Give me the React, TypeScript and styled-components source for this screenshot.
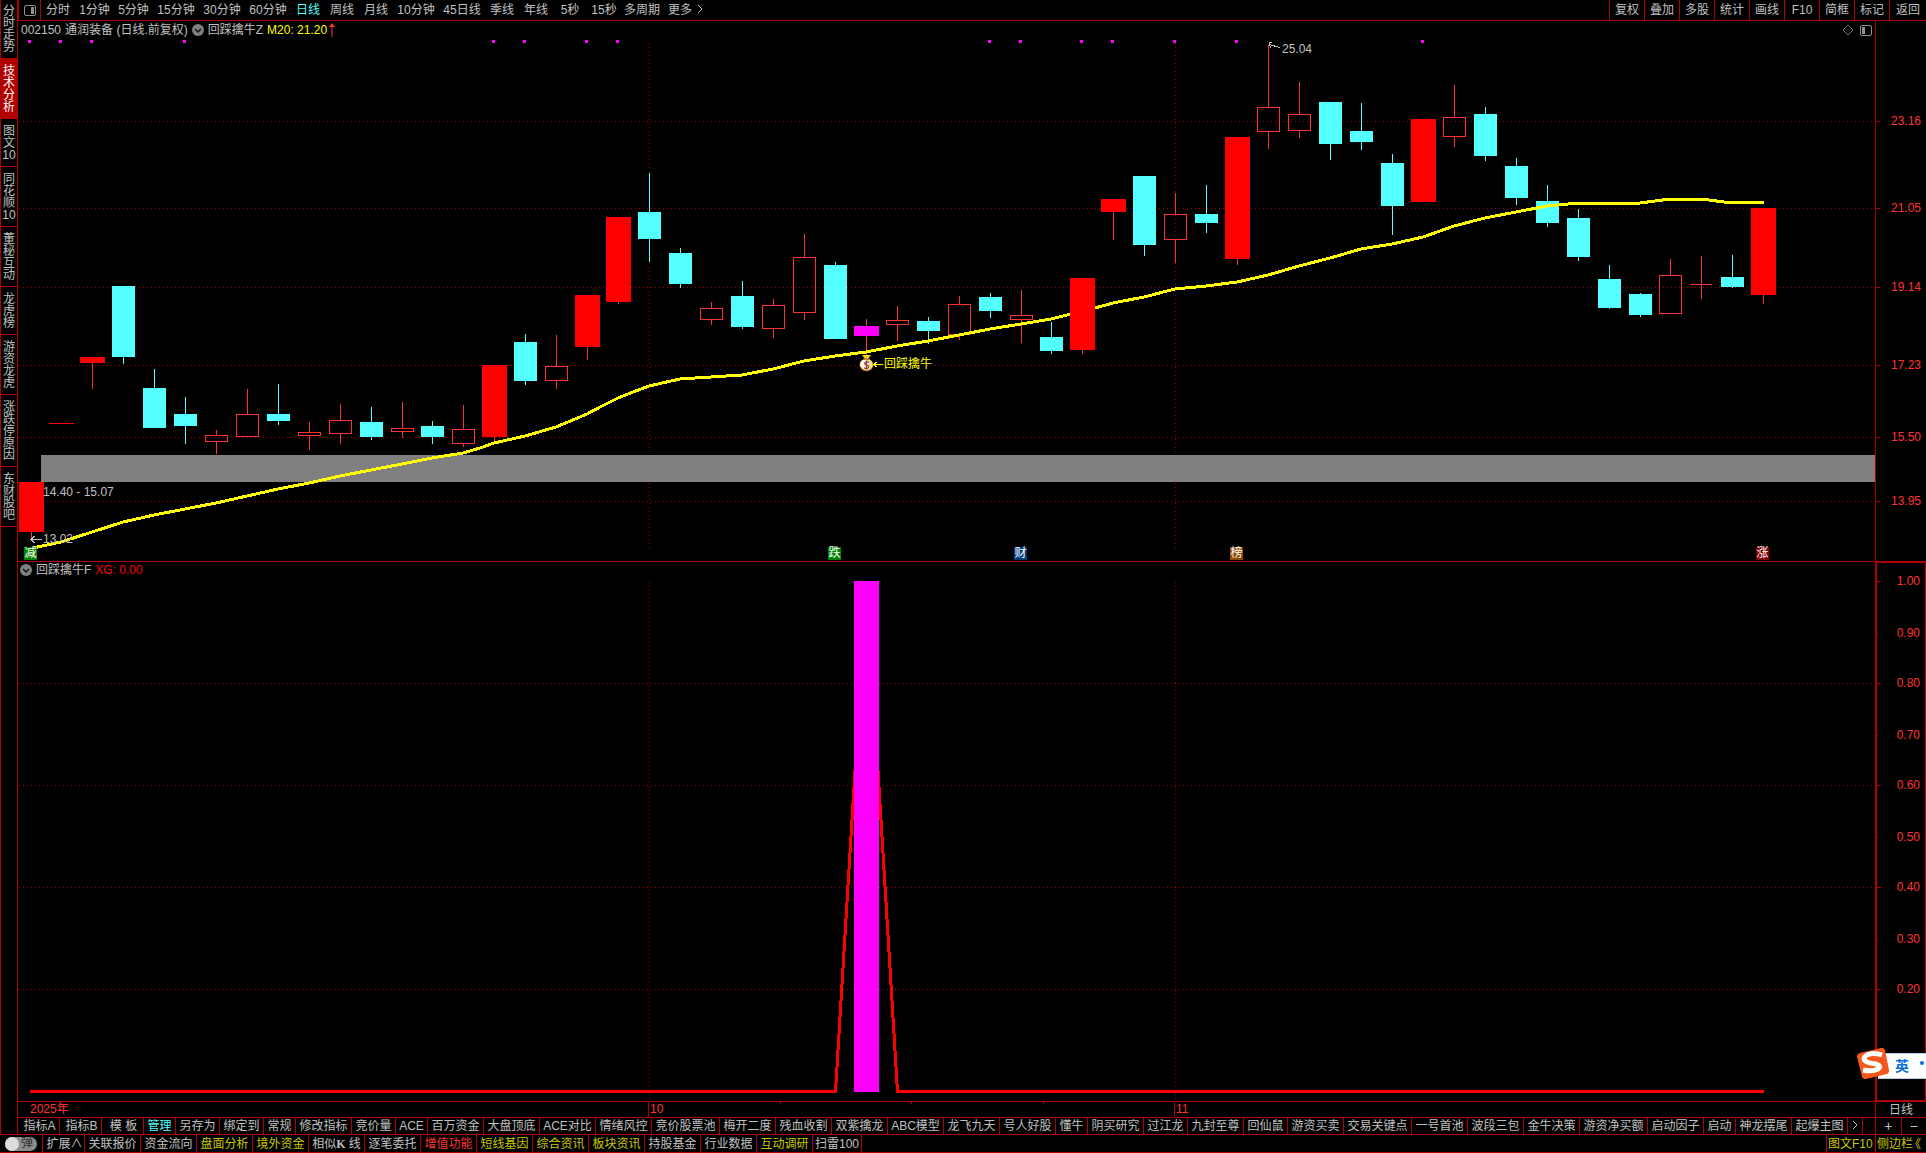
import React from 'react';
import styled, { createGlobalStyle } from 'styled-components';

const c = {
  line: '#b00000',
  grid: '#a00000',
  text: '#c0c0c0',
  cyan: '#54ffff',
  yellow: '#ffff00',
  olive: '#c8c800',
  red: '#ff0000',
  soft: '#ff3232',
  magenta: '#ff00ff',
};

const Global = createGlobalStyle`
  * { box-sizing: border-box; }
  html, body, #root { height: 100%; }
  body {
    margin: 0;
    background: #000;
    color: ${c.text};
    font: 12px/14px "Liberation Sans", "Noto Sans CJK SC", sans-serif;
  }
  button, a {
    font: inherit;
    color: inherit;
    background: none;
    border: 0;
    padding: 0;
    margin: 0;
    text-decoration: none;
    white-space: nowrap;
  }
`;

const Page = styled.div`
  display: flex;
  flex-direction: column;
  height: 100vh;
  overflow: hidden;
`;

const Workspace = styled.div`
  flex: 1;
  display: flex;
  min-height: 0;
`;

const Sidebar = styled.nav`
  flex: 0 0 18px;
  border: 1px solid ${c.line};
  border-top: 0;
`;

const SideTab = styled.button<{ $on?: boolean }>`
  display: block;
  width: 100%;
  padding: 6px 1px 5px;
  border-bottom: 1px solid ${c.line};
  line-height: 12px;
  white-space: normal;
  color: ${(p) => (p.$on ? '#fff' : c.text)};
  background: ${(p) => (p.$on ? c.line : 'none')};
  &:first-child { padding-top: 5px; }
`;

const Main = styled.main`
  flex: 1;
  min-width: 0;
  display: grid;
  grid-template-rows: 21px minmax(0, 541fr) minmax(0, 540fr) 16px 17px;
`;

const Toolbar = styled.header`
  display: flex;
  border-bottom: 1px solid ${c.line};
`;

const Spacer = styled.div`
  flex: 1;
`;

const PanelToggle = styled.button`
  width: 23px;
  display: flex;
  align-items: center;
  justify-content: center;
  border: solid ${c.line};
  border-width: 0 1px;
`;

const widths = { s: 34, m: 39, l: 42, xl: 46 };

const Period = styled.button<{ $size: keyof typeof widths; $on?: boolean }>`
  width: ${(p) => widths[p.$size]}px;
  color: ${(p) => (p.$on ? c.cyan : c.text)};
`;

const Tool = styled.button`
  width: 35px;
  border-left: 1px solid ${c.line};
  &:last-child { width: 37px; }
`;

const Row = styled.div`
  display: grid;
  grid-template-columns: minmax(0, 1fr) 51px;
`;

const Plot = styled.section`
  position: relative;
  border-bottom: 1px solid ${c.line};
`;

const Drawing = styled.svg`
  position: absolute;
  inset: 0;
  width: 100%;
  height: 100%;
`;

const Caption = styled.div<{ $tight?: boolean }>`
  position: relative;
  display: flex;
  align-items: center;
  gap: 4px;
  height: ${(p) => (p.$tight ? 16 : 18)}px;
  padding: 0 ${(p) => (p.$tight ? 2 : 3)}px;
`;

const Value = styled.span<{ $color: string }>`
  display: flex;
  align-items: center;
  gap: 2px;
  color: ${(p) => p.$color};
`;

const Corner = styled.div`
  display: flex;
  align-items: center;
  gap: 6px;
`;

const Mark = styled.span<{ $color?: string }>`
  position: absolute;
  transform: translateY(-50%);
  white-space: nowrap;
  color: ${(p) => p.$color || c.text};
`;

const Badge = styled.span<{ $bg: string }>`
  position: absolute;
  width: 13px;
  height: 13px;
  line-height: 13px;
  text-align: center;
  color: #fff;
  background: ${(p) => p.$bg};
`;

const PriceAxis = styled.aside`
  position: relative;
  border: 0 solid ${c.line};
  border-width: 0 0 1px 1px;
`;

const ValueAxis = styled.aside`
  position: relative;
  border: solid ${c.line};
  border-width: 1px 1px 2px 2px;
`;

const Tick = styled.div<{ $minor?: boolean }>`
  position: absolute;
  left: 0;
  right: 5px;
  height: 13px;
  line-height: 13px;
  margin-top: -6px;
  display: flex;
  align-items: center;
  justify-content: space-between;
  color: ${c.soft};
  &::before {
    content: '';
    width: ${(p) => (p.$minor ? 1 : 4)}px;
    height: 1px;
    background: ${c.line};
  }
`;

const Dates = styled.div`
  position: relative;
  border-bottom: 1px solid ${c.line};
`;

const DateMark = styled.span<{ $rule?: boolean }>`
  position: absolute;
  top: 0;
  height: 15px;
  line-height: 15px;
  padding-left: 1px;
  border-left: 1px solid ${(p) => (p.$rule ? c.line : 'transparent')};
  color: ${c.soft};
`;

const DateTick = styled.i`
  position: absolute;
  top: 0;
  width: 1px;
  height: 2px;
  background: ${c.line};
`;

const SideCell = styled.div`
  display: flex;
  align-items: stretch;
  justify-content: center;
  border: 0 solid ${c.line};
  border-width: 0 0 1px 1px;
`;

const Half = styled.button`
  flex: 1;
  font-size: 14px;
  line-height: 14px;
  & + & { border-left: 1px solid ${c.line}; }
`;

const Strip = styled.nav`
  display: flex;
  overflow: hidden;
  border-bottom: 1px solid ${c.line};
`;

const cellWidths = { xs: 15, two: 32, label: 42, three: 44, mixed: 49, four: 56, five: 68 };

const Cell = styled.button<{ $w: keyof typeof cellWidths; $color?: string }>`
  flex: 0 0 ${(p) => cellWidths[p.$w]}px;
  padding-left: ${(p) => (p.$w === 'label' ? 2 : 0)}px;
  border-right: 1px solid ${c.line};
  color: ${(p) => p.$color || c.text};
`;

const Footer = styled.footer`
  flex: 0 0 18px;
  min-height: 0;
  display: flex;
  border-bottom: 1px solid ${c.line};
`;

const SwitchBox = styled.label`
  flex: 0 0 43px;
  display: flex;
  align-items: center;
  justify-content: center;
  border-right: 1px solid ${c.line};
  position: relative;
`;

const Switch = styled.input`
  appearance: none;
  margin: 0;
  width: 32px;
  height: 14px;
  border-radius: 7px;
  background: #8c8c8c;
  display: flex;
  &::before {
    content: '';
    width: 14px;
    height: 14px;
    border-radius: 50%;
    background: #dcdcdc;
  }
`;

const SwitchText = styled.span`
  position: absolute;
  left: 21px;
  top: 1px;
  color: #303030;
`;

const Serif = styled.b`
  font-family: "Liberation Serif", serif;
`;

const FootLink = styled.a<{ $wide?: boolean }>`
  flex: 0 0 ${(p) => (p.$wide ? 51 : 49)}px;
  display: flex;
  align-items: center;
  padding-left: 1px;
  border-left: 1px solid ${c.line};
  color: ${c.olive};
  overflow: hidden;
`;

const HalfMark = styled.span`
  margin-left: 2px;
  font-family: "Noto Sans CJK SC", sans-serif;
  font-feature-settings: "halt";
`;

const ImeBar = styled.div`
  position: fixed;
  right: 0;
  bottom: 74px;
  width: 48px;
  height: 26px;
  display: flex;
  align-items: center;
  background: #fff;
  border: solid #b8d0ee;
  border-width: 1px 0;
  color: #0a6fd8;
  font-size: 14px;
  font-weight: bold;
`;

const ImeText = styled.span`
  margin: 0 11px 0 17px;
`;

const ImeLogo = styled.svg`
  position: absolute;
  left: -21px;
  bottom: -1px;
  width: 32px;
  height: 31px;
`;

const ImeDot = styled.i`
  width: 4px;
  height: 4px;
  margin-bottom: 6px;
  border-radius: 50%;
  background: #0a6fd8;
`;

type Box = { x: number; y: number; w: number; h: number };
const priceBox: Box = { x: 18, y: 21, w: 1857, h: 540 };
const valueBox: Box = { x: 18, y: 562, w: 1857, h: 539 };
const valueAxisBox: Box = { x: 1877, y: 563, w: 48, h: 537 };
const viewBox = (b: Box) => `${b.x} ${b.y} ${b.w} ${b.h}`;
const at = (b: Box, x: number, y: number) => ({
  left: `${((x - b.x) / b.w) * 100}%`,
  top: `${((y - b.y) / b.h) * 100}%`,
});

// kind, centre x, body top, body bottom, high, low
type Candle = [string, number, number, number, number, number];
const candles: Candle[] = [
  ['r', 31, 482, 532, 482, 538],
  ['l', 61, 423, 424, 423, 424],
  ['r', 92, 357, 363, 357, 389],
  ['d', 123, 286, 357, 286, 364],
  ['d', 154, 388, 428, 369, 428],
  ['d', 185, 414, 426, 397, 444],
  ['u', 216, 435, 442, 430, 454],
  ['u', 247, 414, 437, 389, 437],
  ['d', 278, 414, 421, 384, 425],
  ['u', 309, 432, 436, 422, 450],
  ['u', 340, 420, 434, 404, 444],
  ['d', 371, 422, 437, 407, 440],
  ['u', 402, 428, 432, 402, 438],
  ['d', 432, 426, 437, 421, 444],
  ['u', 463, 429, 444, 405, 447],
  ['r', 494, 365, 437, 365, 441],
  ['d', 525, 342, 381, 334, 385],
  ['u', 556, 366, 381, 335, 389],
  ['r', 587, 295, 347, 295, 360],
  ['r', 618, 217, 302, 217, 304],
  ['d', 649, 212, 239, 173, 262],
  ['d', 680, 253, 284, 248, 288],
  ['u', 711, 308, 320, 302, 325],
  ['d', 742, 296, 327, 281, 329],
  ['u', 773, 305, 329, 299, 338],
  ['u', 804, 257, 313, 234, 320],
  ['d', 835, 265, 339, 262, 339],
  ['m', 866, 326, 336, 319, 355],
  ['u', 897, 320, 325, 306, 341],
  ['d', 928, 321, 331, 317, 344],
  ['u', 959, 304, 335, 296, 340],
  ['d', 990, 297, 311, 293, 318],
  ['u', 1021, 315, 320, 290, 343],
  ['d', 1051, 337, 351, 322, 354],
  ['r', 1082, 278, 350, 278, 354],
  ['r', 1113, 199, 212, 199, 240],
  ['d', 1144, 176, 245, 176, 256],
  ['u', 1175, 214, 240, 193, 263],
  ['d', 1206, 214, 223, 185, 233],
  ['r', 1237, 137, 259, 137, 265],
  ['u', 1268, 107, 132, 45, 149],
  ['u', 1299, 114, 131, 82, 138],
  ['d', 1330, 102, 144, 102, 160],
  ['d', 1361, 131, 142, 103, 150],
  ['d', 1392, 163, 206, 154, 235],
  ['r', 1423, 119, 202, 119, 202],
  ['u', 1454, 117, 137, 85, 147],
  ['d', 1485, 114, 156, 107, 161],
  ['d', 1516, 166, 198, 158, 205],
  ['d', 1547, 201, 223, 185, 227],
  ['d', 1578, 218, 257, 209, 261],
  ['d', 1609, 279, 308, 265, 309],
  ['d', 1640, 294, 315, 293, 317],
  ['u', 1670, 275, 314, 259, 314],
  ['+', 1701, 284, 285, 256, 299],
  ['d', 1732, 277, 287, 255, 288],
  ['r', 1763, 208, 295, 208, 304],
];

const average =
  '28,549 61,542 92,532 123,522 154,515 185,509 216,503 247,496 278,489 309,483 340,476 371,470 402,464 432,458 463,453 480,448 494,443 525,436 556,427 587,414 602,406 618,398 633,392 649,386 680,379 711,377 742,375 773,369 804,361 835,356 866,352 897,346 928,341 959,335 990,329 1021,324 1051,319 1071,314 1095,308 1113,303 1144,297 1175,289 1206,286 1237,282 1268,275 1299,266 1330,258 1361,249 1392,244 1423,237 1454,226 1485,218 1516,212 1547,206 1578,203 1640,203 1670,199 1701,199 1732,203 1750,202 1764,202';

const signals = [28, 59, 90, 183, 492, 523, 585, 616, 988, 1019, 1080, 1111, 1173, 1235, 1421];
const prices: [string, number][] = [
  ['23.16', 121], ['21.05', 208], ['19.14', 287], ['17.23', 365], ['15.50', 437], ['13.95', 501],
];
const values: [string, number][] = [
  ['1.00', 581], ['0.90', 633], ['0.80', 683], ['0.70', 735], ['0.60', 785],
  ['0.50', 837], ['0.40', 887], ['0.30', 939], ['0.20', 989],
];

function CandleShape({ data }: { data: Candle }) {
  const [kind, x, top, bottom, high, low] = data;
  const color = kind === 'd' ? c.cyan : c.soft;
  const h = bottom - top;
  return (
    <g>
      {high < top && <rect x={x} y={high} width={1} height={top - high} fill={color} />}
      {low > bottom && <rect x={x} y={bottom} width={1} height={low - bottom} fill={color} />}
      {kind === 'd' && <rect x={x - 11} y={top} width={23} height={h} fill={c.cyan} />}
      {kind === 'u' && <rect x={x - 10.5} y={top + 0.5} width={22} height={h - 1} fill="none" stroke={c.soft} />}
      {(kind === 'r' || kind === 'l') && <rect x={x - 12} y={top} width={25} height={h} fill={c.red} />}
      {kind === '+' && <rect x={x - 11} y={top} width={22} height={1} fill={c.soft} />}
      {kind === 'm' && <rect x={x - 12} y={top} width={25} height={h} fill={c.magenta} />}
    </g>
  );
}

function Dotted({ d }: { d: string }) {
  return <path d={d} stroke={c.grid} strokeDasharray="1 3" fill="none" />;
}

function Chevron() {
  return (
    <svg width="12" height="12" viewBox="0 0 12 12" aria-hidden="true">
      <circle cx="6" cy="6" r="6" fill="#808080" />
      <path d="M3 5l3 3 3-3" stroke="#101010" strokeWidth="1.5" fill="none" />
    </svg>
  );
}

function PanelIcon({ right }: { right?: boolean }) {
  return (
    <svg width="12" height="11" viewBox="0 0 12 11" aria-hidden="true">
      <rect x="0.5" y="0.5" width="11" height="10" rx="1.5" fill="none" stroke="#909090" />
      <rect x={right ? 7 : 2} y="2" width="3" height="7" fill="#909090" />
    </svg>
  );
}

function PriceChart() {
  return (
    <Drawing viewBox={viewBox(priceBox)} preserveAspectRatio="none" shapeRendering="crispEdges">
      {prices.map(([p, y]) => <Dotted key={p} d={`M19 ${y + 0.5}H1875`} />)}
      <Dotted d="M649.5 43V548" />
      <Dotted d="M1175.5 43V548" />
      <rect x="41" y="455" width="1834" height="27" fill="#808080" />
      {signals.map((x) => <rect key={x} x={x} y="40" width="3" height="3" fill={c.magenta} />)}
      {candles.filter((k) => k[0] !== 'r').map((k) => <CandleShape key={k[1]} data={k} />)}
      <polyline points={average} fill="none" stroke={c.yellow} strokeWidth="3" />
      {candles.filter((k) => k[0] === 'r').map((k) => <CandleShape key={k[1]} data={k} />)}
      <path d="M31 539.5H42M34.5 536L31 539.5L34.5 543" stroke={c.text} fill="none" />
      <path d="M1280 47.5L1269 44.5M1272 42.5H1269V45L1271 47.5" stroke={c.text} fill="none" />
      <g shapeRendering="auto">
        <path d="M862 355h9l-3 4h-3z" fill="#f0d800" />
        <ellipse cx="866.5" cy="365" rx="7" ry="6.5" fill="#8a4a30" />
        <ellipse cx="866.5" cy="364.7" rx="6.4" ry="5.8" fill="#f6e27a" />
        <ellipse cx="864.5" cy="364" rx="4.2" ry="4" fill="#fffbe0" />
        <path d="M863.5 358.500h6v1.500h-6z" fill="#c08040" />
        <path d="M869 362.5q-2-1.2-4 0q-1 2 1.5 2.500q3.500 .8 1.500 3q-2 1-4-.3M866.5 360.500v9" stroke="#8a3a50" strokeWidth="1.2" fill="none" />
      </g>
      <path d="M874 364.5H883M876.500 362L874 364.500L876.500 367" stroke={c.yellow} fill="none" />
    </Drawing>
  );
}

function ValueChart() {
  return (
    <Drawing viewBox={viewBox(valueBox)} preserveAspectRatio="none" shapeRendering="crispEdges">
      {[683, 785, 887, 989].map((y) => <Dotted key={y} d={`M19 ${y + 0.5}H1875`} />)}
      <Dotted d="M649.5 582V1101" />
      <Dotted d="M1175.5 582V1101" />
      <polyline points="30,1091.5 835.5,1091.5 866.5,581 897.5,1091.5 1764,1091.5" fill="none" stroke={c.red} strokeWidth="3" />
      <rect x="854" y="581" width="25" height="511" fill={c.magenta} />
    </Drawing>
  );
}

const sideTabs = ['分时走势', '技术分析', '图文10', '同花顺10', '董秘互动', '龙虎榜', '游资龙虎', '涨跌停原因', '东财股吧'];

const periods: [string, keyof typeof widths][] = [
  ['分时', 's'], ['1分钟', 'm'], ['5分钟', 'm'], ['15分钟', 'xl'], ['30分钟', 'xl'], ['60分钟', 'xl'],
  ['日线', 's'], ['周线', 's'], ['月线', 's'], ['10分钟', 'xl'], ['45日线', 'xl'], ['季线', 's'],
  ['年线', 's'], ['5秒', 's'], ['15秒', 's'], ['多周期', 'l'], ['更多', 's'],
];

const tools = ['复权', '叠加', '多股', '统计', '画线', 'F10', '简框', '标记', '返回'];

type W = keyof typeof cellWidths;
const templates: [string, W][] = [
  ['指标A', 'label'], ['指标B', 'label'], ['模 板', 'label'], ['管理', 'two'], ['另存为', 'three'], ['绑定到', 'three'],
  ['常规', 'two'], ['修改指标', 'four'], ['竞价量', 'three'], ['ACE', 'two'], ['百万资金', 'four'], ['大盘顶底', 'four'],
  ['ACE对比', 'four'], ['情绪风控', 'four'], ['竞价股票池', 'five'], ['梅开二度', 'four'], ['残血收割', 'four'],
  ['双紫擒龙', 'four'], ['ABC模型', 'four'], ['龙飞九天', 'four'], ['号人好股', 'four'], ['懂牛', 'two'],
  ['阴买研究', 'four'], ['过江龙', 'three'], ['九封至尊', 'four'], ['回仙鼠', 'three'], ['游资买卖', 'four'],
  ['交易关键点', 'five'], ['一号首池', 'four'], ['波段三包', 'four'], ['金牛决策', 'four'], ['游资净买额', 'five'],
  ['启动因子', 'four'], ['启动', 'two'], ['神龙摆尾', 'four'], ['起爆主图', 'four'],
];

const extras: [React.ReactNode, W, string?][] = [
  ['扩展∧', 'label'], ['关联报价', 'four'], ['资金流向', 'four'], ['盘面分析', 'four', c.olive], ['境外资金', 'four', c.olive],
  [<>相似<Serif>K</Serif> 线</>, 'four'], ['逐笔委托', 'four'], ['增值功能', 'four', c.soft], ['短线基因', 'four', c.olive],
  ['综合资讯', 'four', c.olive], ['板块资讯', 'four', c.olive], ['持股基金', 'four'], ['行业数据', 'four'],
  ['互动调研', 'four', c.olive], ['扫雷100', 'mixed'],
];

const badges: [string, number, string][] = [
  ['减', 24, '#008000'], ['跌', 828, '#008000'], ['财', 1014, '#003c78'], ['榜', 1230, '#904800'], ['涨', 1756, '#800000'],
];

const across = (x: number) => `${((x - 18) / 1857) * 100}%`;

export default function App() {
  return (
    <Page>
      <Global />
      <Workspace>
        <Sidebar>
          {sideTabs.map((t, i) => <SideTab key={t} $on={i === 1}>{t}</SideTab>)}
        </Sidebar>
        <Main>
          <Toolbar>
            <PanelToggle aria-label="面板"><PanelIcon right /></PanelToggle>
            {periods.map(([t, s]) => <Period key={t} $size={s} $on={t === '日线'}>{t}</Period>)}
            <button aria-label="展开">
              <svg width="6" height="10" viewBox="0 0 6 10"><path d="M1 1l4 4-4 4" stroke={c.text} fill="none" /></svg>
            </button>
            <Spacer />
            {tools.map((t) => <Tool key={t}>{t}</Tool>)}
          </Toolbar>

          <Row>
            <Plot>
              <PriceChart />
              <Caption>
                <span>002150</span>
                <span>通润装备 (日线.前复权)</span>
                <Chevron />
                <span>回踩擒牛Z</span>
                <Value $color={c.yellow}>
                  M20: 21.20
                  <svg width="6" height="14" viewBox="0 0 6 14"><path d="M3 0l3 4H0zM2.500 3h1v11h-1z" fill={c.soft} /></svg>
                </Value>
                <Spacer />
                <Corner>
                  <svg width="12" height="12" viewBox="0 0 12 12"><path d="M6 1l5 5-5 5-5-5z" fill="none" stroke="#707070" /></svg>
                  <PanelIcon />
                </Corner>
              </Caption>
              <Mark style={at(priceBox, 1282, 49)}>25.04</Mark>
              <Mark style={at(priceBox, 43, 492)}>14.40 - 15.07</Mark>
              <Mark style={at(priceBox, 43, 539)}>13.02</Mark>
              <Mark $color={c.yellow} style={at(priceBox, 884, 364)}>回踩擒牛</Mark>
              {badges.map(([t, x, bg]) => <Badge key={t} $bg={bg} style={at(priceBox, x, 547)}>{t}</Badge>)}
            </Plot>
            <PriceAxis>
              {prices.map(([p, y]) => <Tick key={p} style={{ top: at(priceBox, 0, y).top }}>{p}</Tick>)}
            </PriceAxis>
          </Row>

          <Row>
            <Plot>
              <ValueChart />
              <Caption $tight>
                <Chevron />
                <span>回踩擒牛F</span>
                <Value $color={c.red}>XG: 0.00</Value>
              </Caption>
            </Plot>
            <ValueAxis>
              {values.map(([v, y], i) => (
                <Tick key={v} $minor={i % 2 === 1} style={{ top: at(valueAxisBox, 0, y).top }}>{v}</Tick>
              ))}
            </ValueAxis>
          </Row>

          <Row>
            <Dates>
              <DateMark style={{ left: across(28) }}>2025年</DateMark>
              <DateMark $rule style={{ left: across(648) }}>10</DateMark>
              <DateMark $rule style={{ left: across(1174) }}>11</DateMark>
              {[780, 911, 1043].map((x) => <DateTick key={x} style={{ left: across(x) }} />)}
            </Dates>
            <SideCell><button>日线</button></SideCell>
          </Row>

          <Row>
            <Strip>
              {templates.map(([t, w]) => (
                <Cell key={t} $w={w} $color={t === '管理' ? c.cyan : undefined}>{t}</Cell>
              ))}
              <Cell $w="xs" aria-label="更多模板">
                <svg width="6" height="10" viewBox="0 0 6 10"><path d="M1 1l4 4-4 4" stroke={c.text} fill="none" /></svg>
              </Cell>
            </Strip>
            <SideCell>
              <Half>+</Half>
              <Half>−</Half>
            </SideCell>
          </Row>
        </Main>
      </Workspace>

      <Footer>
        <SwitchBox>
          <Switch type="checkbox" />
          <SwitchText>弹</SwitchText>
        </SwitchBox>
        {extras.map(([t, w, color], i) => <Cell key={i} $w={w} $color={color}>{t}</Cell>)}
        <Spacer />
        <FootLink href="#f10">图文F10</FootLink>
        <FootLink href="#side" $wide>侧边栏<HalfMark>《</HalfMark></FootLink>
      </Footer>

      <ImeBar>
        <ImeLogo viewBox="0 0 32 31">
          <path d="M3 5L24 0q3-.5 4 2l4 20q.5 3-2 4L9 31q-3 .5-4-2L0 9q-.5-3 3-4z" fill="#f4581c" />
          <path d="M25 7q-9-3-15 0q-6 4 0 7q4 1.500 9 2q6 2 2 5q-6 3-15 1" fill="none" stroke="#fff" strokeWidth="5" />
        </ImeLogo>
        <ImeText>英</ImeText>
        <ImeDot />
      </ImeBar>
    </Page>
  );
}
